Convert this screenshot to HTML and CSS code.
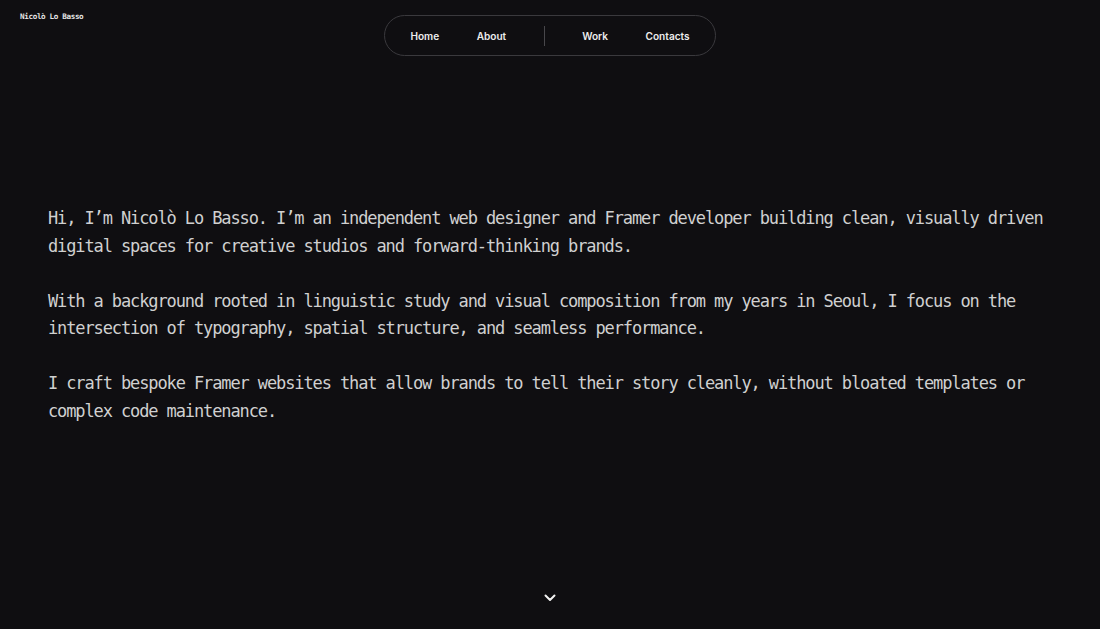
FILE: index.html
```html
<!DOCTYPE html>
<html lang="en">

<head>
  <meta charset="UTF-8" />
  <meta name="viewport" content="width=device-width, initial-scale=1.0" />
  <title>Nicolò Lo Basso</title>
  <link rel="stylesheet" href="styles.css">
</head>

<body>
  <header class="site_header">
    <a href="#" class="site_header-logo">Nicolò Lo Basso</a>
    <nav class="nav_pill">
      <a href="#" class="nav_pill-link">Home</a>
      <a href="#" class="nav_pill-link">About</a>
      <span class="nav_pill-divider"></span>
      <a href="#" class="nav_pill-link">Work</a>
      <a href="#" class="nav_pill-link">Contacts</a>
    </nav>
    <span></span>
  </header>

  <main class="intro">
    <p class="intro-text">Hi, I’m Nicolò Lo Basso. I’m an independent web designer and Framer developer building clean, visually driven digital spaces for creative studios and forward-thinking brands.</p>
    <p class="intro-text">With a background rooted in linguistic study and visual composition from my years in Seoul, I focus on the intersection of typography, spatial structure, and seamless performance.</p>
    <p class="intro-text">I craft bespoke Framer websites that allow brands to tell their story cleanly, without bloated templates or complex code maintenance.</p>
  </main>

  <footer class="scroll_hint">
    <!-- down chevron, points at the next section -->
    <svg width="12" height="8" viewBox="0 0 12 8">
      <path d="M1.5 1.5 L6 6 L10.5 1.5" fill="none" stroke="#f2f2f2" stroke-width="2" stroke-linecap="round" stroke-linejoin="round" />
    </svg>
  </footer>
</body>
</html>
```

FILE: styles.css
```css
html {
  box-sizing: border-box;
}

body {
  display: flex;
  flex-direction: column;
  min-height: 100vh;
  margin: 0;
  background: #0f0e11;
  color: #d0d0d0;
  font-family: "DejaVu Sans Mono", "Liberation Mono", monospace;
}

a {
  color: inherit;
  text-decoration: none;
}

.site_header {
  display: grid;
  grid-template-columns: 1fr auto 1fr;
  align-items: start;
  padding: 11px 20px 0;
}

.site_header-logo {
  font-family: "DejaVu Sans Mono", monospace;
  font-size: 7.6px;
  font-weight: 700;
  line-height: 11px;
  letter-spacing: -0.35px;
  color: #e6e6e6;
}

.nav_pill {
  display: flex;
  align-items: center;
  gap: 37.5px;
  height: 41px;
  margin-top: 4px;
  padding: 0 25px;
  box-sizing: border-box;
  border: solid 1px #3a393d;
  border-radius: 21px;
}

.nav_pill-link {
  font-family: Inter, "Liberation Sans", sans-serif;
  font-size: 10.1px;
  font-weight: 600;
  color: #ececec;
}

.nav_pill-divider {
  width: 1px;
  height: 20px;
  background: #48474b;
}

.intro {
  flex: 1;
  padding: 149px 48px 0;
}

.intro-text {
  max-width: 1004px;
  margin: 0 0 27.5px;
  font-size: 17px;
  line-height: 27.5px;
  letter-spacing: -1.11px;
}

.scroll_hint {
  display: flex;
  justify-content: center;
  padding-bottom: 27px;
}

.scroll_hint svg {
  display: block;
}
```
